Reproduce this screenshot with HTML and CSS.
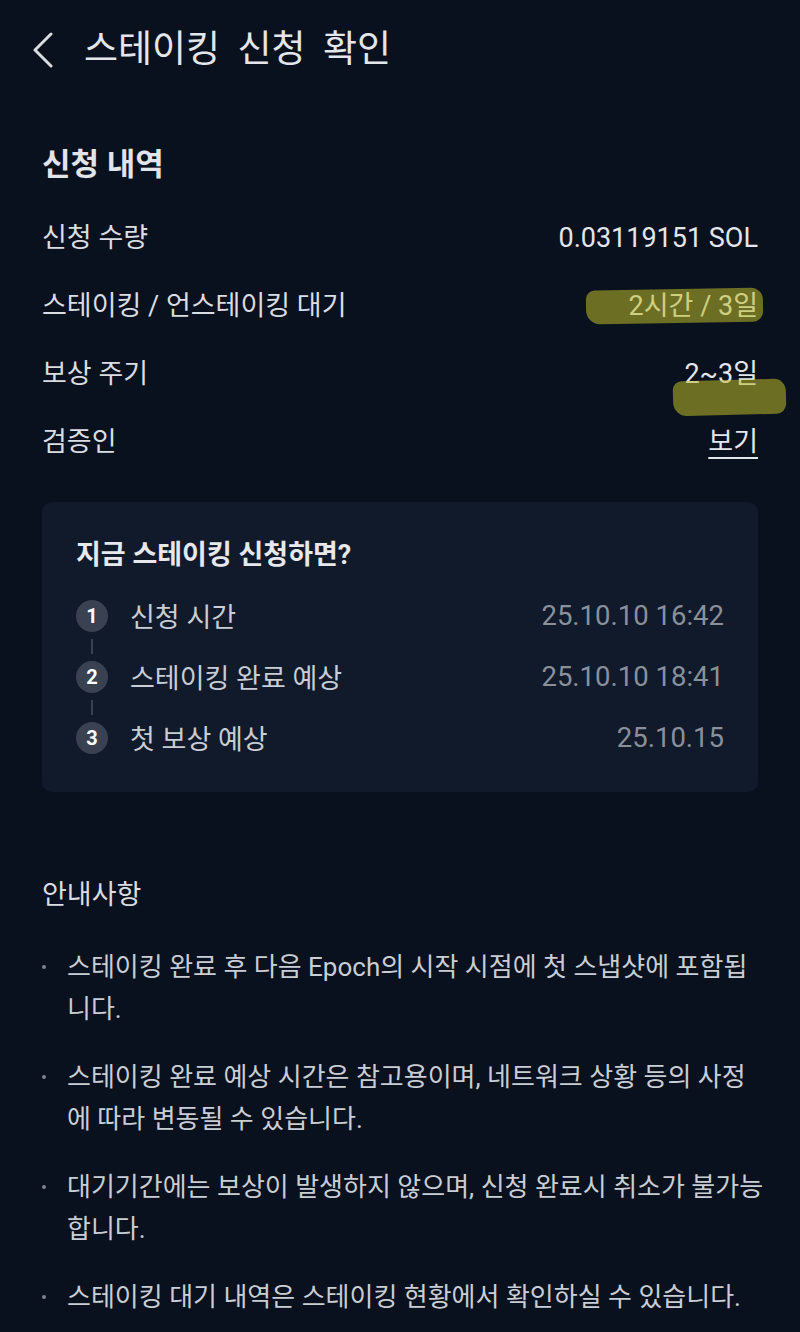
FILE: index.html
```html
<!DOCTYPE html>
<html lang="ko">
<head>
  <meta charset="UTF-8" />
  <meta name="viewport" content="width=device-width, initial-scale=1.0"/>
  <title>스테이킹 신청 확인</title>
  <link rel="stylesheet" href="styles.css">
</head>
<body>

  <header class="topbar">
    <button class="back-btn" aria-label="뒤로">
      <svg width="22" height="36" viewBox="0 0 22 36" fill="none">
        <path d="M19 2 L3 18 L19 34" stroke="#d9dce1" stroke-width="3" stroke-linecap="round" stroke-linejoin="round"/>
      </svg>
    </button>
    <h1>스테이킹 신청 확인</h1>
  </header>

  <main class="content">
    <section class="summary">
      <h2>신청 내역</h2>
      <div class="row">
        <span class="label">신청 수량</span>
        <span class="value">0.03119151 SOL</span>
      </div>
      <div class="row">
        <span class="label">스테이킹 / 언스테이킹 대기</span>
        <span class="value">2시간 / 3일<i class="marker marker-one"></i></span>
      </div>
      <div class="row">
        <span class="label">보상 주기</span>
        <span class="value">2~3일<i class="marker marker-two"></i></span>
      </div>
      <div class="row">
        <span class="label">검증인</span>
        <a class="value link" href="#">보기</a>
      </div>
    </section>

    <section class="preview">
      <h3>지금 스테이킹 신청하면?</h3>
      <ol class="steps">
        <li class="step">
          <span class="num">1</span>
          <span class="step-name">신청 시간</span>
          <span class="step-date">25.10.10 16:42</span>
        </li>
        <li class="step">
          <span class="num">2</span>
          <span class="step-name">스테이킹 완료 예상</span>
          <span class="step-date">25.10.10 18:41</span>
        </li>
        <li class="step">
          <span class="num">3</span>
          <span class="step-name">첫 보상 예상</span>
          <span class="step-date">25.10.15</span>
        </li>
      </ol>
    </section>

    <section class="notice">
      <h4>안내사항</h4>
      <ul>
        <li>스테이킹 완료 후 다음 Epoch의 시작 시점에 첫 스냅샷에 포함됩<br>니다.</li>
        <li>스테이킹 완료 예상 시간은 참고용이며, 네트워크 상황 등의 사정<br>에 따라 변동될 수 있습니다.</li>
        <li>대기기간에는 보상이 발생하지 않으며, 신청 완료시 취소가 불가능<br>합니다.</li>
        <li>스테이킹 대기 내역은 스테이킹 현황에서 확인하실 수 있습니다.</li>
      </ul>
    </section>
  </main>

</body>
</html>
```

FILE: styles.css
```css
* {
  margin: 0;
  padding: 0;
  box-sizing: border-box;
}

html, body {
  background: #0a111e;
  color: #e1e4e9;
  font-family: Roboto, "Noto Sans CJK KR", sans-serif;
}

body {
  width: 800px;
  min-height: 1332px;
  overflow: hidden;
}

/* header */
.topbar {
  height: 100px;
  display: flex;
  align-items: center;
  padding-left: 32px;
}

.back-btn {
  background: none;
  border: none;
  width: 24px;
  height: 36px;
  display: flex;
  align-items: center;
  margin-right: 28px;
}

.topbar h1 {
  font-size: 37px;
  font-weight: 400;
  word-spacing: 0.22em;
  color: #e3e6ea;
  line-height: 44px;
}

.content {
  padding: 0 42px;
}

/* summary */
.summary {
  padding-top: 45px;
}

.summary h2 {
  font-size: 31px;
  font-weight: 700;
  line-height: 40px;
  margin-bottom: 19px;
}

.row {
  height: 68px;
  display: flex;
  align-items: center;
  justify-content: space-between;
  font-size: 27px;
  line-height: 40px;
}

.label {
  color: #dadde2;
}

.value {
  position: relative;
  display: inline-block;
  color: #e3e6ea;
}

.link {
  color: #e3e6ea;
  text-decoration: underline;
  text-underline-offset: 6px;
  text-decoration-thickness: 1.5px;
}

.marker {
  position: absolute;
  display: block;
  background: rgba(190, 188, 40, 0.55);
  border-radius: 9px 12px 10px 14px;
}

.marker-one {
  top: 3px;
  right: -5px;
  width: 177px;
  height: 34px;
  transform: rotate(-1deg);
}

.marker-two {
  top: 26px;
  right: -28px;
  width: 113px;
  height: 35px;
  transform: rotate(-1.5deg);
}

/* preview card */
.preview {
  margin-top: 26px;
  background: #111a2b;
  border-radius: 10px;
  padding: 36px 34px 24px;
}

.preview h3 {
  font-size: 27px;
  font-weight: 700;
  line-height: 34px;
  color: #e6e8ec;
  margin-bottom: 13px;
}

.steps {
  list-style: none;
}

.step {
  height: 61px;
  display: flex;
  align-items: center;
  font-size: 27px;
}

.num {
  position: relative;
  width: 32px;
  height: 32px;
  border-radius: 50%;
  background: #3a4151;
  color: #fff;
  font-size: 20px;
  font-weight: 700;
  display: flex;
  align-items: center;
  justify-content: center;
  margin-right: 22px;
}

.step:not(:last-child) .num::after {
  content: "";
  position: absolute;
  left: 15px;
  top: 39px;
  width: 2px;
  height: 15px;
  background: #3a4151;
}

.step-name {
  flex: 1;
  color: #c9cdd4;
}

.step-date {
  font-size: 27.5px;
  color: #8a909b;
}

/* notice */
.notice {
  margin-top: 83px;
  margin-right: -36px;
}

.notice h4 {
  font-size: 27px;
  font-weight: 400;
  line-height: 40px;
  color: #dadde2;
  margin-bottom: 31px;
}

.notice ul {
  list-style: none;
}

.notice li {
  position: relative;
  padding-left: 25px;
  font-size: 26px;
  line-height: 42px;
  color: #c9cdd4;
  margin-bottom: 26px;
  white-space: nowrap;
}

.notice li::before {
  content: "";
  position: absolute;
  left: 0;
  top: 19px;
  width: 4px;
  height: 4px;
  border-radius: 50%;
  background: #7d838e;
}
```
